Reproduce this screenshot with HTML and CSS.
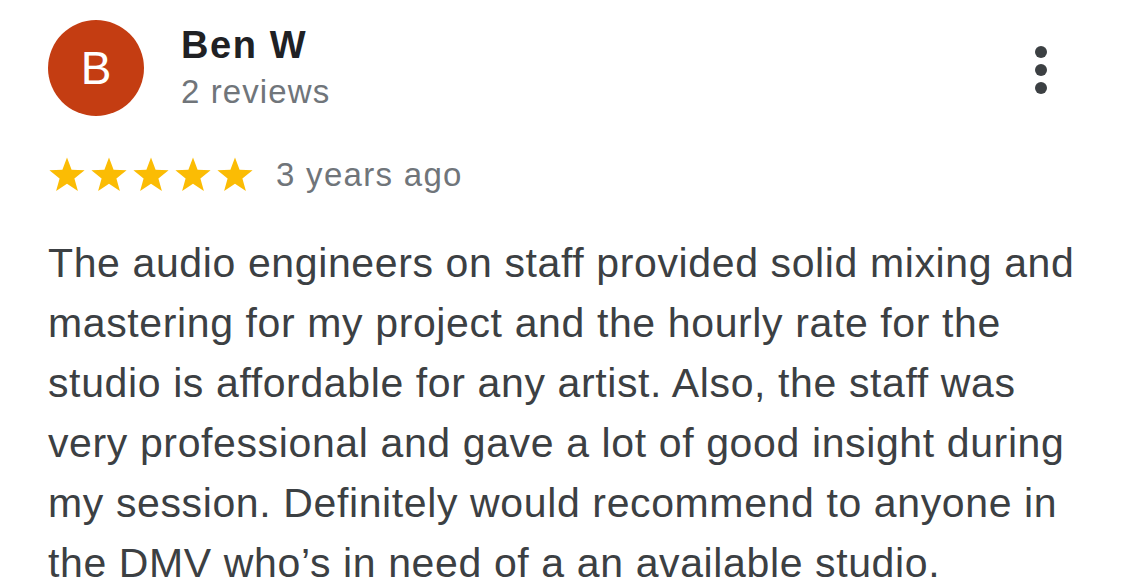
FILE: index.html
```html
<!DOCTYPE html>
<html>
<head>
<meta charset="utf-8">
<link rel="stylesheet" href="styles.css">
</head>
<body>
<div class="review">
  <div class="header">
    <div class="avatar">B</div>
    <div class="who">
      <div class="name">Ben W</div>
      <div class="count">2 reviews</div>
    </div>
    <div class="more">
      <svg width="14" height="50" viewBox="0 0 14 50"><circle cx="7" cy="7" r="6" fill="#3c4043"/><circle cx="7" cy="25" r="6" fill="#3c4043"/><circle cx="7" cy="43" r="6" fill="#3c4043"/></svg>
    </div>
  </div>
  <div class="meta">
    <div class="stars">
      <svg width="206" height="38" viewBox="0 0 206 38">
        <defs><path id="s" d="M19 1.5 L23.6 13.8 L36.6 14.3 L26.4 22.4 L29.9 35 L19 27.7 L8.1 35 L11.6 22.4 L1.4 14.3 L14.4 13.8 Z" fill="#fbbc04"/></defs>
        <use href="#s" x="0"/><use href="#s" x="42"/><use href="#s" x="84"/><use href="#s" x="126"/><use href="#s" x="168"/>
      </svg>
    </div>
    <span class="ago">3 years ago</span>
  </div>
  <p class="text">The audio engineers on staff provided solid mixing and mastering for my project and the hourly rate for the studio is affordable for any artist. Also, the staff was very professional and gave a lot of good insight during my session. Definitely would recommend to anyone in the DMV who’s in need of a an available studio.</p>
</div>
</body>
</html>
```
FILE: styles.css
```css
html, body { margin: 0; padding: 0; background: #fff; }
body { font-family: "Liberation Sans", Arial, sans-serif; width: 1125px; height: 586px; overflow: hidden; }
.review { padding: 20px 40px 0 48px; }
.header { display: flex; align-items: flex-start; }
.avatar { width: 96px; height: 96px; border-radius: 50%; background: #c43d12; color: #fff; font-size: 46px; display: flex; align-items: center; justify-content: center; flex: none; }
.who { margin-left: 37px; padding-top: 3px; flex: 1; }
.name { font-size: 38px; font-weight: bold; color: #202124; line-height: 44px; letter-spacing: 1.6px; }
.count { font-size: 33px; color: #70757a; line-height: 44px; margin-top: 3px; letter-spacing: 1.1px; }
.more { margin-top: 25px; margin-right: 37px; }
.meta { display: flex; align-items: center; margin-top: 40px; }
.stars svg { display: block; }
.ago { font-size: 33px; color: #70757a; margin-left: 22px; letter-spacing: 1.3px; }
.text { margin: 39px 0 0 0; font-size: 41px; line-height: 60px; color: #3c4043; letter-spacing: 0.62px; }
```
